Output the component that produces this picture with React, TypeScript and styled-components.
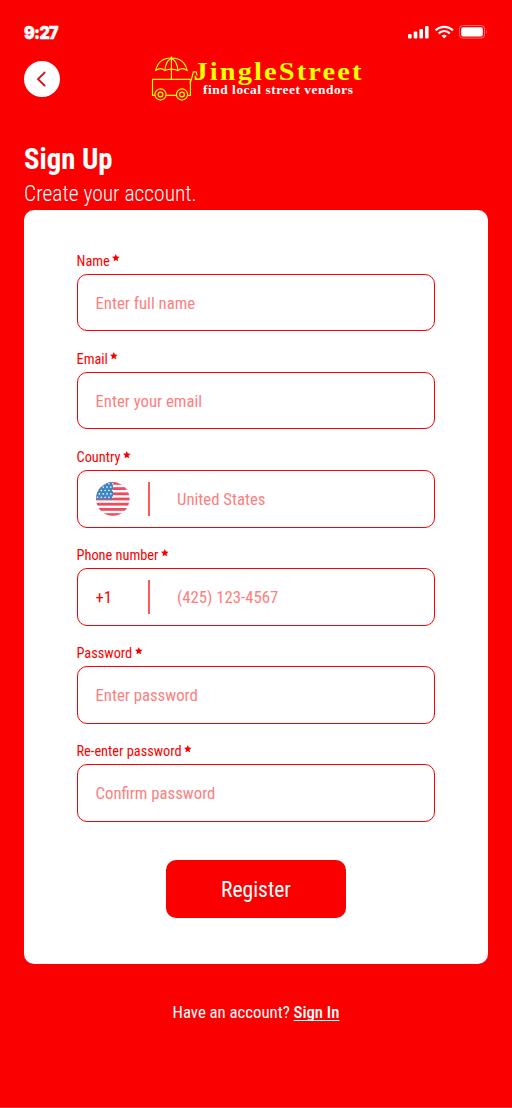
import React from "react";
import styled, { createGlobalStyle } from "styled-components";

const RED = "#fb0000";

const Global = createGlobalStyle`
  * { box-sizing: border-box; }
  body { margin: 0; background: #fff; font-family: "Roboto Condensed", Roboto, "Liberation Sans", sans-serif; font-stretch: 75%; }
`;

const Screen = styled.main`
  width: 512px;
  height: 1108px;
  background: ${RED};
  border-bottom: 1px solid #fb3a3a;
  padding: 0 24px;
  display: flex;
  flex-direction: column;
`;

const StatusBar = styled.div`
  height: 61px;
  padding: 22px 0 0;
  display: flex;
  align-items: flex-start;
  justify-content: space-between;
`;

const Clock = styled.span`
  font: 900 17.5px/22px Inter, "Liberation Sans", sans-serif;
  letter-spacing: -0.7px;
  -webkit-text-stroke: 0.4px #fff;
  color: #fff;
  transform: scaleX(0.91);
  transform-origin: left;
`;

const StatusIcons = styled.svg`
  width: 82px;
  height: 16px;
  margin: 2px -1px 0 0;
`;

const Header = styled.header`
  height: 79px;
  display: flex;
  align-items: flex-start;
`;

const BackButton = styled.button`
  width: 36px;
  height: 36px;
  padding: 0;
  border: 0;
  border-radius: 50%;
  background: #fff;
  display: grid;
  place-items: center;
`;

const Logo = styled.svg`
  width: 220px;
  height: 54px;
  margin: -8px 0 0 86px;
`;

const Title = styled.h1`
  margin: 0;
  color: #fff;
  font-size: 28.7px;
  line-height: 38px;
  font-weight: 700;
`;

const Subtitle = styled.p`
  margin: 0;
  color: #fff;
  font-size: 21.5px;
  line-height: 32.4px;
  font-weight: 300;
`;

const Card = styled.form`
  height: 753.6px;
  border-radius: 10px;
  background: #fff;
  padding: 41.2px 52.5px 0;
  display: flex;
  flex-direction: column;
`;

const Field = styled.div`
  height: 98.1px;
`;

const Label = styled.div`
  height: 22.4px;
  display: flex;
  align-items: flex-start;
  color: ${RED};
  font-size: 14.35px;
  line-height: 20px;
`;

const Star = styled.svg`
  width: 7.6px;
  height: 7.6px;
  margin: 2.8px 0 0 2.6px;
`;

const Box = styled.div`
  width: 358.8px;
  height: 57.4px;
  border: 1.2px solid ${RED};
  border-radius: 10px;
  padding: 0 18px;
  display: flex;
  align-items: center;
  color: ${RED};
  font-size: 16.75px;
  white-space: nowrap;
`;

const Prefix = styled.div`
  width: 52px;
  display: flex;
`;

const Divider = styled.i`
  width: 2px;
  height: 34px;
  margin-right: 27.5px;
  background: #fb5a5a;
`;

const Placeholder = styled.span`
  color: #fd8080;
`;

const Register = styled.button`
  width: 180px;
  height: 57.4px;
  margin: 20px auto 0;
  border: 0;
  border-radius: 10px;
  background: ${RED};
  color: #fff;
  font: inherit;
  font-size: 21.5px;
  padding: 2px 0 0;
`;

const Footer = styled.footer`
  margin-top: 38px;
  text-align: center;
  color: #fff;
  font-size: 16.75px;
  line-height: 20px;
`;

const SignIn = styled.a`
  font-weight: 500;
  text-decoration: underline;
  text-decoration-skip-ink: none;
  text-underline-offset: 2px;
  text-decoration-thickness: 1px;
`;

const Flag = () => (
  <svg width="34" height="34" viewBox="0 0 34 34">
    <clipPath id="round"><circle cx="16.8" cy="16.9" r="16.8" /></clipPath>
    <g clipPath="url(#round)">
      <rect width="34" height="34" fill="#fff" />
      {[0, 1, 2, 3, 4, 5, 6].map((i) => (
        <rect key={i} y={i * 5.2} width="34" height="2.8" fill="#ef4a5e" />
      ))}
      <rect width="17" height="17.3" fill="#3f87c0" />
      {[0, 1, 2, 3, 4].map((r) =>
        [0, 1, 2, 3, 4].map((c) => (
          <circle key={`${r}-${c}`} cx={1.5 + c * 3.8 - (r % 2) * 1.9} cy={1.7 + r * 3.4} r="0.8" fill="#fff" />
        ))
      )}
    </g>
  </svg>
);

const fields: { label: string; hint: string; prefix?: React.ReactNode }[] = [
  { label: "Name", hint: "Enter full name" },
  { label: "Email", hint: "Enter your email" },
  { label: "Country", hint: "United States", prefix: <Flag /> },
  { label: "Phone number", hint: "(425) 123-4567", prefix: "+1" },
  { label: "Password", hint: "Enter password" },
  { label: "Re-enter password", hint: "Confirm password" },
];

export default function App() {
  return (
    <Screen>
      <Global />
      <StatusBar>
        <Clock>9:27</Clock>
        <StatusIcons viewBox="0 0 82 16" fill="#fff">
          <rect x="1" y="10" width="3.6" height="4.4" rx="1" />
          <rect x="6.7" y="7.6" width="3.6" height="6.8" rx="1" />
          <rect x="12.4" y="5" width="3.6" height="9.4" rx="1" />
          <rect x="18" y="2" width="3.6" height="12.4" rx="1" />
          <g fill="none" stroke="#fff" strokeWidth="2.3">
            <path d="M28.6 6.3 C33.5 1.6 41 1.6 45.9 6.3" />
            <path d="M31.7 9.4 C35 6.3 39.5 6.3 42.8 9.4" />
          </g>
          <path d="M34.6 11.7 Q37.2 9.7 39.9 11.7 L37.2 14.5Z" />
          <rect x="52.5" y="1.5" width="25" height="12.6" rx="3.2" fill="none" stroke="#fff" strokeOpacity=".4" />
          <rect x="54.2" y="3.2" width="21.6" height="9.3" rx="1.8" />
          <path d="M79 5.7 Q80.8 7.8 79 9.9Z" fillOpacity=".4" />
        </StatusIcons>
      </StatusBar>
      <Header>
        <BackButton aria-label="Back">
          <svg width="36" height="36" viewBox="0 0 36 36" fill="none" stroke="#d80b0b" strokeWidth="1.9" strokeLinecap="round" strokeLinejoin="round">
            <path d="M20.6 11.6 L14 18.1 L20.6 24.6" />
          </svg>
        </BackButton>
        <Logo viewBox="146 53 220 54">
          <g fill="none" stroke="#ff0" strokeWidth="1.15" strokeLinejoin="round" strokeLinecap="round">
            <path d="M155.6 70.6 C157.5 62.5 163.5 58 171.4 58 C179.3 58 185.3 62.5 187.2 70.6 Q182 66.5 177.8 70.6 Q171.4 67.6 165 70.6 Q160.8 66.5 155.6 70.6Z" />
            <path d="M165 70.6 C165 65 167.5 60.5 171.4 58 C175.3 60.5 177.8 65 177.8 70.6 M171.4 56.8 V79" />
            <path d="M154.8 95.4 H152.5 V79.4 H190.4 V95.4 H187.6 M166.2 95.4 H176.4" />
            <path d="M190.2 83 Q192.2 77.5 193.3 71.9 H196.2 L197 75" />
            <circle cx="160.5" cy="94.5" r="5.6" /><circle cx="160.5" cy="94.5" r="2.4" />
            <circle cx="182" cy="94.5" r="5.6" /><circle cx="182" cy="94.5" r="2.4" />
          </g>
          <text x="193.5" y="79.8" fontFamily="Liberation Serif, serif" fontWeight="700" fontSize="25" letterSpacing="1.9" fill="#ff0" textLength="170" lengthAdjust="spacingAndGlyphs">JingleStreet</text>
          <text x="203" y="94.3" fontFamily="Liberation Serif, serif" fontWeight="700" fontSize="12.4" letterSpacing="0.5" fill="#fff" textLength="150.5" lengthAdjust="spacingAndGlyphs">find local street vendors</text>
        </Logo>
      </Header>
      <Title>Sign Up</Title>
      <Subtitle>Create your account.</Subtitle>
      <Card>
        {fields.map((f) => (
          <Field key={f.label}>
            <Label>
              {f.label}
              <Star viewBox="0 0 10 10" fill={RED}>
                <path d="M5 0 L6.4 3.3 L10 3.7 L7.3 6.1 L8.1 9.7 L5 7.8 L1.9 9.7 L2.7 6.1 L0 3.7 L3.6 3.3Z" />
              </Star>
            </Label>
            <Box>
              {f.prefix && <Prefix>{f.prefix}</Prefix>}
              {f.prefix && <Divider />}
              <Placeholder>{f.hint}</Placeholder>
            </Box>
          </Field>
        ))}
        <Register type="button">Register</Register>
      </Card>
      <Footer>
        Have an account? <SignIn>Sign In</SignIn>
      </Footer>
    </Screen>
  );
}
